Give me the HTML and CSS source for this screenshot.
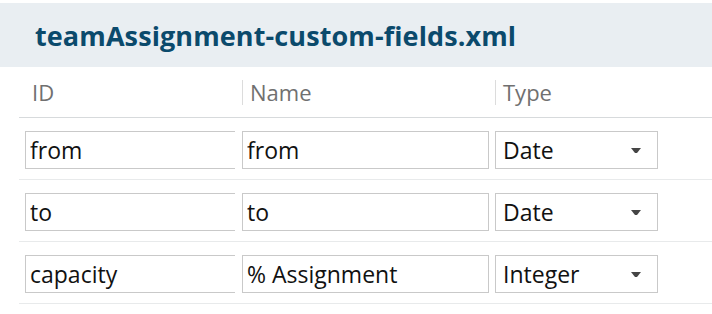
FILE: index.html
```html
<!DOCTYPE html>
<html lang="en">
<head>
	<meta charset="UTF-8">
	<title>teamAssignment-custom-fields.xml</title>
	<link rel="stylesheet" href="styles.css">
</head>
<body>

	<div class="panel">
		<div class="panel-title">teamAssignment-custom-fields.xml</div>

		<div class="fields">
			<div class="fields-row fields-header">
				<div class="fields-id">ID</div>
				<div class="fields-name">Name</div>
				<div class="fields-type">Type</div>
			</div>

			<div class="fields-row">
				<div class="fields-id"><input class="field-input field-input-id" type="text" value="from"></div>
				<div class="fields-name"><input class="field-input" type="text" value="from"></div>
				<div class="fields-type">
					<div class="field-select">Date
						<svg class="field-caret" width="10" height="5" viewBox="0 0 10 5"><polygon points="0,0 10,0 6,5 4,5" /></svg>
					</div>
				</div>
			</div>

			<div class="fields-row">
				<div class="fields-id"><input class="field-input field-input-id" type="text" value="to"></div>
				<div class="fields-name"><input class="field-input" type="text" value="to"></div>
				<div class="fields-type">
					<div class="field-select">Date
						<svg class="field-caret" width="10" height="5" viewBox="0 0 10 5"><polygon points="0,0 10,0 6,5 4,5" /></svg>
					</div>
				</div>
			</div>

			<div class="fields-row">
				<div class="fields-id"><input class="field-input field-input-id" type="text" value="capacity"></div>
				<div class="fields-name"><input class="field-input" type="text" value="% Assignment"></div>
				<div class="fields-type">
					<div class="field-select">Integer
						<svg class="field-caret" width="10" height="5" viewBox="0 0 10 5"><polygon points="0,0 10,0 6,5 4,5" /></svg>
					</div>
				</div>
			</div>
		</div>
	</div>

</body>
</html>
```

FILE: styles.css
```css
body {
	margin: 0;
	font-family: "Open Sans", "Noto Sans", sans-serif;
	background-color: #fff;
}
.panel {
	padding-top: 3px;
}
.panel-title {
	height: 64px;
	padding-left: 35px;
	line-height: 66px;
	font-size: 27px;
	font-weight: 700;
	letter-spacing: 0.1px;
	color: #0b4a6c;
	background-color: #e9eef2;
}

.fields {
	margin-left: 19px;
}
.fields-row {
	display: grid;
	grid-template-columns: 223px 253px 1fr;
	padding: 13px 0 10px;
	border-bottom: 1px solid #e8eaeb;
}
.fields-row .fields-id {
	padding-left: 6px;
}

/* header */
.fields-header {
	height: 50px;
	padding: 0;
	align-items: center;
	border-bottom-color: #d7dadc;
	font-size: 22px;
	color: #707070;
}
.fields-header .fields-id {
	padding-left: 13px;
}
.fields-header .fields-name, .fields-header .fields-type {
	padding-left: 7px;
	border-left: 1px solid #dcdcdc;
	line-height: 25px;
}

/* inputs */
.field-input {
	box-sizing: border-box;
	display: block;
	width: 247px;
	height: 38px;
	margin: 0;
	padding: 0 4px;
	border: 1px solid #c9c9c9;
	border-radius: 0;
	outline: none;
	font-family: inherit;
	font-size: 23px;
	color: #111;
	background: #fff;
}
.field-input-id {
	width: 210px;
	border-right: 0;
}
.field-select {
	box-sizing: border-box;
	display: flex;
	align-items: center;
	justify-content: space-between;
	width: 163px;
	height: 38px;
	padding: 0 16px 0 7px;
	border: 1px solid #c9c9c9;
	font-size: 23px;
	color: #111;
}
.field-caret {
	fill: #454545;
}
```
